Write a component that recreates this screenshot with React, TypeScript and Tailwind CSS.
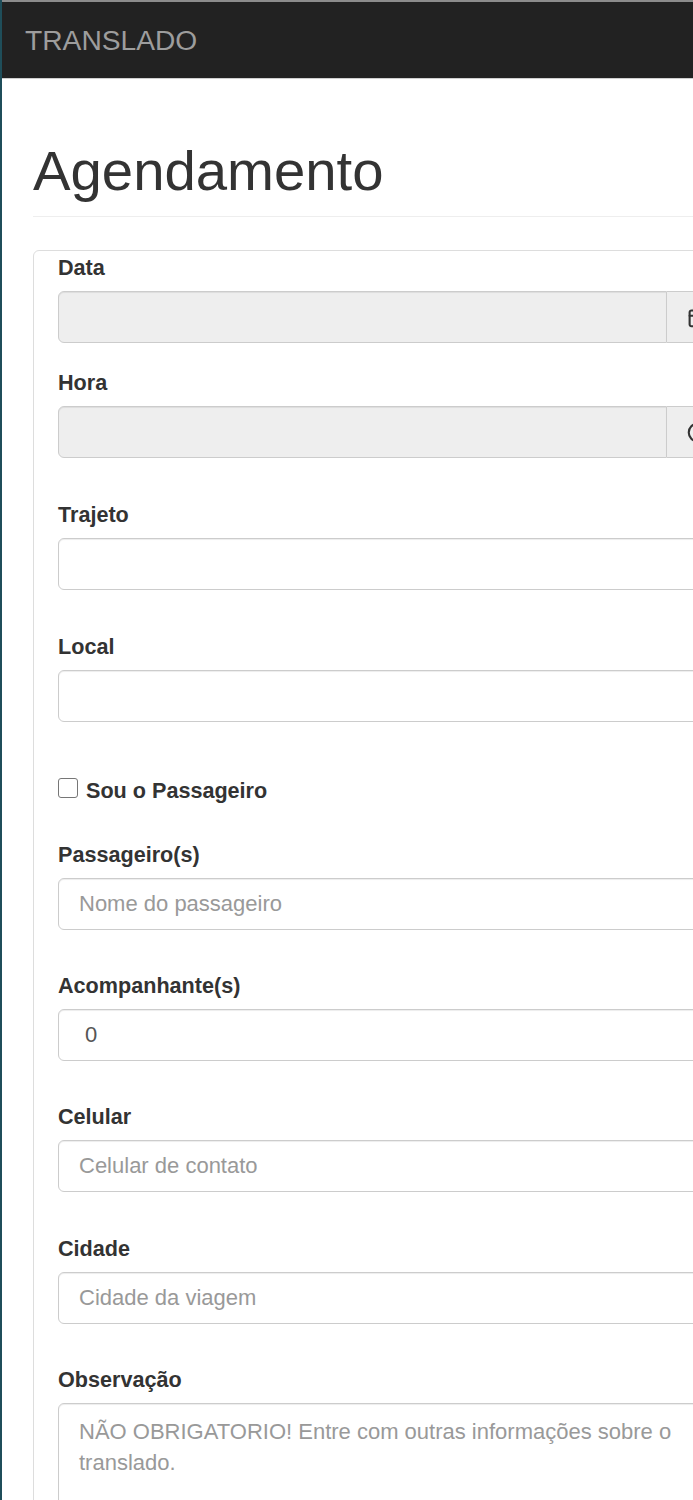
import { Calendar, Clock } from 'lucide-react'

const labelCls = 'block text-[21.6px] font-bold leading-[30px] text-[#333] mb-[8px]'
const inputCls =
  'block w-[667px] h-[52px] rounded-[6px] border border-[#ccc] bg-white px-[20px] text-[22px] text-[#555] outline-none placeholder:text-[#999] shadow-[inset_0_1px_1px_rgba(0,0,0,0.075)]'

function AddonField({ label, icon, className }: { label: string; icon: React.ReactNode; className?: string }) {
  return (
    <div className={className}>
      <label className={labelCls}>{label}</label>
      <div className="flex w-[667px]">
        <input
          readOnly
          className="h-[52px] w-[609px] shrink-0 rounded-l-[6px] border border-[#ccc] bg-[#eee] px-[20px] text-[22px] outline-none shadow-[inset_0_1px_1px_rgba(0,0,0,0.075)]"
        />
        <span className="flex h-[52px] w-[58px] shrink-0 items-center rounded-r-[6px] border border-l-0 border-[#ccc] bg-[#eee] pl-[20px] text-[#333]">
          {icon}
        </span>
      </div>
    </div>
  )
}

function TextField({
  label,
  placeholder,
  value,
  className,
  inputClassName = '',
}: {
  label: string
  placeholder?: string
  value?: string
  className?: string
  inputClassName?: string
}) {
  return (
    <div className={className}>
      <label className={labelCls}>{label}</label>
      <input readOnly placeholder={placeholder} value={value ?? ''} className={`${inputCls} ${inputClassName}`} />
    </div>
  )
}

export default function App() {
  return (
    <div className="h-[1500px] w-[693px] overflow-hidden border-l-2 border-[#1f4e5a] bg-white font-['Liberation_Sans',Arial,Helvetica,sans-serif] text-[#333]">
      <nav className="h-[79px] border-t-2 border-b border-t-[#8c8c8c] border-b-[#cfcfcf] bg-[#222]">
        <div className="flex h-[76px] items-center pl-[23px]">
          <span className="text-[28.2px] leading-none text-[#9d9d9d]">TRANSLADO</span>
        </div>
      </nav>

      <div className="pl-[31px]">
        <div className="mt-[62px] w-[1000px] border-b border-[#eee] pb-[15px]">
          <h1 className="text-[56.3px] font-normal leading-[60px] text-[#333]">Agendamento</h1>
        </div>

        <div className="mt-[33px] w-[717px] rounded-[6px] border border-[#ddd] px-[24px] pt-[2px] pb-[30px]">
          <AddonField label="Data" icon={<Calendar size={21} strokeWidth={2.4} />} />
          <AddonField className="mt-[25px]" label="Hora" icon={<Clock size={21} strokeWidth={2.4} />} />

          <TextField className="mt-[42px]" label="Trajeto" />
          <TextField className="mt-[42px]" label="Local" />

          <div className="mt-[51px] flex h-[30px] items-center gap-[8px]">
            <span className="h-[20px] w-[20px] shrink-0 rounded-[3px] border-[1.5px] border-[#767676] bg-white" />
            <span className="mt-[5px] text-[21.6px] font-bold leading-[30px] text-[#333]">Sou o Passageiro</span>
          </div>

          <TextField className="mt-[37px]" label="Passageiro(s)" placeholder="Nome do passageiro" />
          <TextField className="mt-[41px]" label="Acompanhante(s)" value="0" inputClassName="pl-[26px]" />
          <TextField className="mt-[41px]" label="Celular" placeholder="Celular de contato" />
          <TextField className="mt-[42px]" label="Cidade" placeholder="Cidade da viagem" />

          <div className="mt-[41px]">
            <label className={labelCls}>Observação</label>
            <textarea
              readOnly
              placeholder="NÃO OBRIGATORIO! Entre com outras informações sobre o translado."
              className="block h-[160px] w-[667px] resize-none rounded-[6px] border border-[#ccc] bg-white px-[20px] pt-[12px] text-[22px] leading-[31px] text-[#555] outline-none placeholder:text-[#999] shadow-[inset_0_1px_1px_rgba(0,0,0,0.075)]"
            />
          </div>
        </div>
      </div>
    </div>
  )
}
